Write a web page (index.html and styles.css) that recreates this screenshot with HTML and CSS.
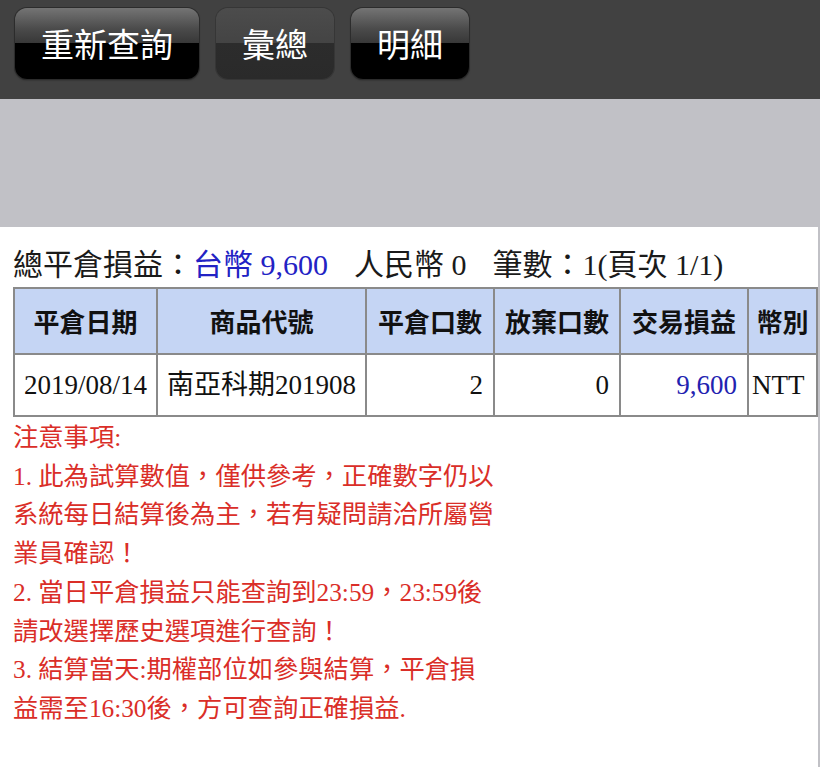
FILE: index.html
```html
<!DOCTYPE html>
<html lang="zh-Hant">
<head>
<meta charset="utf-8">
<title>平倉損益</title>
<link rel="stylesheet" href="styles.css">
</head>
<body>
<header class="topbar">
  <button class="tab">重新查詢</button>
  <button class="tab tab-active">彙總</button>
  <button class="tab">明細</button>
</header>
<div class="band"></div>
<main class="content">
  <div class="summary">總平倉損益：<span class="blue">台幣 9,600</span><span class="seg">人民幣 0</span><span class="seg">筆數：1(頁次 1/1)</span></div>
  <table class="grid">
    <colgroup>
      <col class="c1"><col class="c2"><col class="c3"><col class="c4"><col class="c5"><col class="c6">
    </colgroup>
    <thead>
      <tr><th>平倉日期</th><th>商品代號</th><th>平倉口數</th><th>放棄口數</th><th>交易損益</th><th>幣別</th></tr>
    </thead>
    <tbody>
      <tr><td class="mid">2019/08/14</td><td class="mid">南亞科期201908</td><td class="num">2</td><td class="num">0</td><td class="num blue">9,600</td><td class="cur">NTT</td></tr>
    </tbody>
  </table>
  <div class="notes">
    <div>注意事項:</div>
    <div>1. 此為試算數值，僅供參考，正確數字仍以系統每日結算後為主，若有疑問請洽所屬營業員確認！</div>
    <div>2. 當日平倉損益只能查詢到23:59，23:59後請改選擇歷史選項進行查詢！</div>
    <div>3. 結算當天:期權部位如參與結算，平倉損益需至16:30後，方可查詢正確損益.</div>
  </div>
</main>
</body>
</html>
```
FILE: styles.css
```css
html, body {
  margin: 0;
  padding: 0;
  background: #c1c1c6;
}
body {
  width: 820px;
  height: 767px;
  overflow: hidden;
  font-family: "Liberation Serif", "Noto Sans CJK TC", serif;
  color: #111;
}
.topbar {
  height: 99px;
  box-sizing: border-box;
  background: #414141;
  padding: 8px 0 0 15px;
  display: flex;
  gap: 17px;
  align-items: flex-start;
}
.tab {
  height: 71px;
  margin: 0;
  padding: 0 26px;
  border: none;
  border-radius: 12px;
  font-family: "Noto Sans CJK TC", sans-serif;
  font-size: 33px;
  line-height: 71px;
  color: #fff;
  background: linear-gradient(#747474 0%, #4a4a4a 30%, #383838 49%, #000 50%, #000 100%);
  box-shadow: 0 0 0 1px #2c2c2c, 0 1px 2px rgba(0,0,0,0.5);
}
.tab-active {
  background: linear-gradient(#4c4c4c 0%, #444 49%, #2c2c2c 50%, #2a2a2a 100%);
  box-shadow: 0 0 0 1px #363636;
}
.band {
  height: 128px;
}
.content {
  width: 818px;
  height: 540px;
  box-sizing: border-box;
  background: #fff;
  padding: 20px 0 0 13px;
}
.summary {
  font-size: 30px;
  line-height: 36px;
  margin-bottom: 4px;
  white-space: nowrap;
  color: #1a1a1a;
}
.blue {
  color: #2222c4;
}
.seg {
  margin-left: 26px;
}
.grid {
  width: 805px;
  table-layout: fixed;
  border-collapse: separate;
  border-spacing: 0;
  border-top: 2px solid #8a8a8a;
  border-left: 2px solid #8a8a8a;
}
.c1 { width: 143px; }
.c2 { width: 209px; }
.c3 { width: 128px; }
.c4 { width: 126px; }
.c5 { width: 128px; }
.c6 { width: 69px; }
.grid th,
.grid td {
  border-right: 2px solid #8a8a8a;
  border-bottom: 2px solid #8a8a8a;
  padding: 0 4px;
  white-space: nowrap;
  overflow: hidden;
}
.grid th {
  background: #c5d5f4;
  font-family: "Noto Sans CJK TC", sans-serif;
  font-weight: bold;
  font-size: 26px;
  line-height: 64px;
  height: 64px;
  text-align: center;
  color: #111;
}
.grid td {
  font-size: 27px;
  line-height: 60px;
  height: 60px;
}
.grid td.mid { text-align: center; }
.grid td.num { text-align: right; padding-right: 10px; }
.grid td.cur { text-align: left; padding-left: 3px; }
.grid td.blue { color: #2222b0; }
.notes {
  width: 484px;
  padding-top: 1px;
  font-size: 25.3px;
  line-height: 38.7px;
  color: #da2e28;
}
```
